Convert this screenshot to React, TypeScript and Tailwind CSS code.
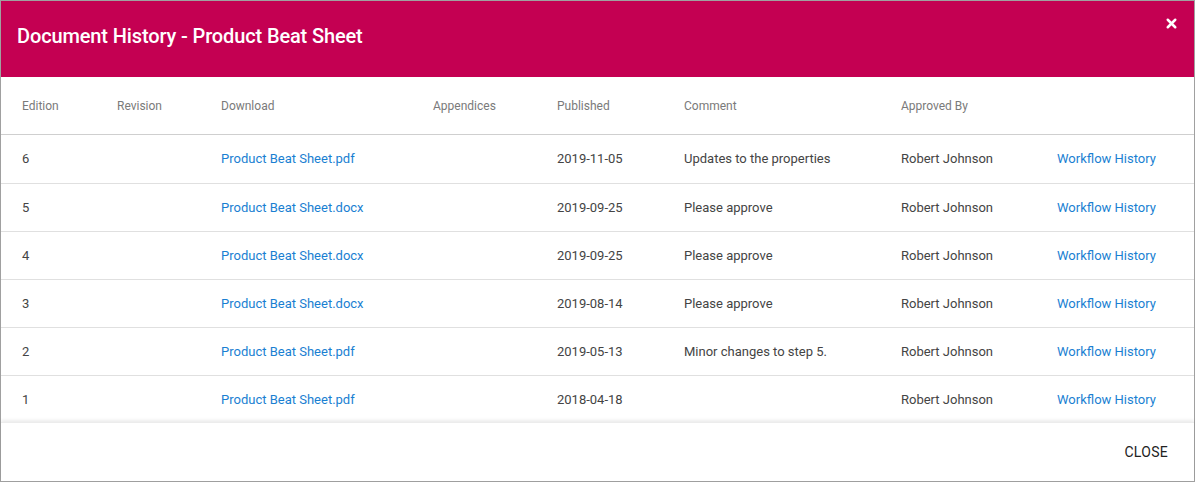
import { X } from 'lucide-react';

type Row = {
  edition: number;
  file: string;
  published: string;
  comment: string;
  approvedBy: string;
};

const rows: Row[] = [
  { edition: 6, file: 'Product Beat Sheet.pdf', published: '2019-11-05', comment: 'Updates to the properties', approvedBy: 'Robert Johnson' },
  { edition: 5, file: 'Product Beat Sheet.docx', published: '2019-09-25', comment: 'Please approve', approvedBy: 'Robert Johnson' },
  { edition: 4, file: 'Product Beat Sheet.docx', published: '2019-09-25', comment: 'Please approve', approvedBy: 'Robert Johnson' },
  { edition: 3, file: 'Product Beat Sheet.docx', published: '2019-08-14', comment: 'Please approve', approvedBy: 'Robert Johnson' },
  { edition: 2, file: 'Product Beat Sheet.pdf', published: '2019-05-13', comment: 'Minor changes to step 5.', approvedBy: 'Robert Johnson' },
  { edition: 1, file: 'Product Beat Sheet.pdf', published: '2018-04-18', comment: '', approvedBy: 'Robert Johnson' },
];

const columns = ['Edition', 'Revision', 'Download', 'Appendices', 'Published', 'Comment', 'Approved By', ''];
const widths = ['w-[116px]', 'w-[104px]', 'w-[212px]', 'w-[124px]', 'w-[127px]', 'w-[217px]', 'w-[156px]', ''];

export default function App() {
  return (
    <div className="w-[1195px] h-[482px] border border-[#a0a0a0] bg-white flex flex-col font-['Roboto',sans-serif]">
      {/* Header */}
      <div className="h-[76px] bg-[#c40052] flex items-start justify-between shrink-0">
        <h1 className="pl-[16px] pt-[22px] text-[20px] leading-[26px] font-medium tracking-[-0.13px] text-white">
          Document History - Product Beat Sheet
        </h1>
        <button className="mt-[15px] mr-[15px] text-white">
          <X className="w-[15px] h-[15px]" strokeWidth={4} />
        </button>
      </div>

      {/* Table */}
      <div className="flex-1 overflow-hidden">
        <table className="w-full table-fixed border-collapse text-[13px]">
          <thead>
            <tr className="h-[57px] border-b border-[#cfcfcf]">
              {columns.map((c, i) => (
                <th
                  key={i}
                  className={`${widths[i]} ${i === 0 ? 'pl-[21px]' : ''} text-left font-normal text-[12px] text-[#7a7a7a] pt-[1px]`}
                >
                  {c}
                </th>
              ))}
            </tr>
          </thead>
          <tbody>
            {rows.map((r) => (
              <tr
                key={r.edition}
                className="h-[48px] first:h-[49px] border-b border-[#e0e0e0] last:border-b-0 text-[#444]"
              >
                <td className="pl-[21px] pt-[1px]">{r.edition}</td>
                <td></td>
                <td className="text-[#1a7fd2] pt-[1px]">{r.file}</td>
                <td></td>
                <td className="pt-[1px]">{r.published}</td>
                <td className="pt-[1px]">{r.comment}</td>
                <td className="pt-[1px]">{r.approvedBy}</td>
                <td className="text-[#1a7fd2] pt-[1px]">Workflow History</td>
              </tr>
            ))}
          </tbody>
        </table>
      </div>

      {/* Footer */}
      <div className="h-[59px] shrink-0 flex items-center justify-end pr-[26px] shadow-[0_-2px_3px_rgba(0,0,0,0.08)] border-t border-[#ececec]">
        <button className="text-[14px] font-normal text-[#222] tracking-[0.3px]">CLOSE</button>
      </div>
    </div>
  );
}
